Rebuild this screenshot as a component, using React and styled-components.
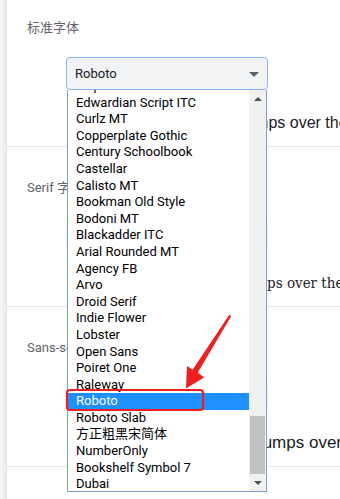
import React from 'react'
import styled, {createGlobalStyle} from 'styled-components'

const GlobalStyle = createGlobalStyle`
  html, body {
    margin: 0;
    padding: 0;
    background: #ffffff;
  }
  body {
    font-family: Roboto, "Noto Sans CJK SC", sans-serif;
  }
`

const fontOptions = [
    'Elephant',
    'Edwardian Script ITC',
    'Curlz MT',
    'Copperplate Gothic',
    'Century Schoolbook',
    'Castellar',
    'Calisto MT',
    'Bookman Old Style',
    'Bodoni MT',
    'Blackadder ITC',
    'Arial Rounded MT',
    'Agency FB',
    'Arvo',
    'Droid Serif',
    'Indie Flower',
    'Lobster',
    'Open Sans',
    'Poiret One',
    'Raleway',
    'Roboto',
    'Roboto Slab',
    '方正粗黑宋简体',
    'NumberOnly',
    'Bookshelf Symbol 7',
    'Dubai',
]

const sample = 'The quick brown fox jumps over the lazy dog'

// indent: where the sample starts, most of it sits under the open list
const sections = [
    {label: '标准字体', family: '"Liberation Sans", Arial, sans-serif', size: 16, indent: 68, open: true},
    {label: 'Serif 字体', family: '"DejaVu Serif Condensed", "DejaVu Serif", serif', size: 15, indent: 70},
    {label: 'Sans-serif 字体', family: '"Liberation Sans", Arial, sans-serif', size: 17, indent: 75},
]

const FontList = ({selected}) => (
    <Dropdown>
        <Options>
            <OptionsInner>
                {fontOptions.map(name => (
                    <Option key={name} $selected={name === selected}>{name}</Option>
                ))}
            </OptionsInner>
        </Options>
        <Scrollbar>
            <ScrollButton><ArrowUp/></ScrollButton>
            <Track>
                <Thumb $offset={309}/>
            </Track>
            <ScrollButton><ArrowDown/></ScrollButton>
        </Scrollbar>
    </Dropdown>
)

const FontSection = ({label, family, size, indent, open}) => (
    <Section>
        <Label>{label}</Label>
        <SelectWrap $open={open}>
            <SelectBox $open={open}>
                <span>Roboto</span>
                <Caret/>
            </SelectBox>
            {open && <FontList selected="Roboto"/>}
        </SelectWrap>
        <Sample $family={family} $size={size} $indent={indent}>{sample}</Sample>
    </Section>
)

const App = () => (
    <>
        <GlobalStyle/>
        <Frame>
            <SideStrip/>
            <Content>
                {sections.map(s => <FontSection key={s.label} {...s}/>)}
            </Content>
            <Annotation viewBox="0 0 340 499" width="340" height="499">
                <rect x="67" y="390" width="136" height="20" rx="3" fill="none" stroke="#ee1f1f" strokeWidth="2.2"/>
                <polygon
                    points="229.5,314.5 231,316.5 197.8,372.6 204,377.5 186,388.5 187,366 192.6,369.8"
                    fill="#ee1f1f"/>
            </Annotation>
        </Frame>
    </>
)

const Frame = styled.div`
  position: relative;
  width: 340px;
  height: 499px;
  overflow: hidden;
  display: flex;
  background: #ffffff;
`
const SideStrip = styled.div`
  width: 6px;
  flex: none;
  background: linear-gradient(to right, #f6f6f6, #ebebeb);
  border-right: 1px solid #e2e2e2;
`
const Content = styled.div`
  flex: 1;
  margin-top: -13px;
  min-width: 0;
`
const Section = styled.div`
  box-sizing: border-box;
  height: 160px;
  padding: 31px 0 0 20px;
  border-bottom: 1px solid #e8e8e8;
`
const Label = styled.div`
  font-family: Roboto, "Noto Sans CJK SC", sans-serif;
  font-size: 13px;
  line-height: 20px;
  color: #5f6368;
  white-space: nowrap;
`
const SelectWrap = styled.div`
  position: relative;
  width: 202px;
  margin: 19px 0 0 39px;
  z-index: ${p => (p.$open ? 3 : 1)};
`
const SelectBox = styled.div`
  box-sizing: border-box;
  height: 33px;
  display: flex;
  align-items: center;
  justify-content: space-between;
  padding: 0 8px 0 8px;
  background: #f1f3f4;
  border: 1px solid ${p => (p.$open ? '#8ab4f8' : 'transparent')};
  border-radius: 4px;
  font-size: 13px;
  color: #202124;
`
const Caret = styled.span`
  width: 0;
  height: 0;
  border-left: 5px solid transparent;
  border-right: 5px solid transparent;
  border-top: 5px solid #5f6368;
  margin-top: 2px;
`
const Sample = styled.div`
  margin: 20px 0 0 ${p => p.$indent}px;
  line-height: 26px;
  white-space: nowrap;
  font-family: ${p => p.$family};
  font-size: ${p => p.$size}px;
  color: #202124;
`
const Dropdown = styled.div`
  position: absolute;
  top: 100%;
  left: 1px;
  box-sizing: border-box;
  width: 200px;
  height: 402px;
  display: flex;
  background: #ffffff;
  border: 1px solid #7f9fd6;
  border-top: 0;
`
const Options = styled.div`
  flex: 1;
  overflow: hidden;
`
const OptionsInner = styled.div`
  margin-top: -12px;
`
const Option = styled.div`
  height: 16.6px;
  line-height: 16.6px;
  padding-left: 8px;
  font-family: Roboto, "Noto Sans CJK SC", sans-serif;
  font-size: 13px;
  white-space: nowrap;
  color: ${p => (p.$selected ? '#ffffff' : '#000000')};
  background: ${p => (p.$selected ? '#1e90ff' : 'transparent')};
`
const Scrollbar = styled.div`
  width: 17px;
  flex: none;
  display: flex;
  flex-direction: column;
  background: #f1f1f1;
`
const ScrollButton = styled.div`
  height: 17px;
  flex: none;
  display: flex;
  align-items: center;
  justify-content: center;
`
const ArrowUp = styled.span`
  width: 0;
  height: 0;
  border-left: 4px solid transparent;
  border-right: 4px solid transparent;
  border-bottom: 4px solid #505050;
`
const ArrowDown = styled(ArrowUp)`
  border-bottom: 0;
  border-top: 4px solid #505050;
`
const Track = styled.div`
  flex: 1;
  display: flex;
  flex-direction: column;
`
const Thumb = styled.div`
  margin: ${p => p.$offset}px 1px 0 1px;
  flex: 1;
  background: #c1c1c1;
`
const Annotation = styled.svg`
  position: absolute;
  left: 0;
  top: 0;
  pointer-events: none;
  z-index: 5;
`

export default App
